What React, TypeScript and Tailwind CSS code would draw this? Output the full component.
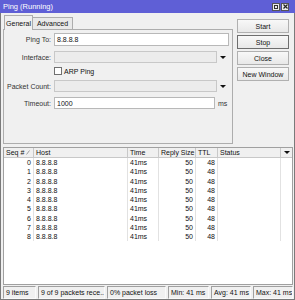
import React from "react";

const rows = Array.from({ length: 9 }, (_, i) => i);

function Arrow() {
  return (
    <div className="w-0 h-0 border-l-[3px] border-r-[3px] border-t-[3px] border-l-transparent border-r-transparent border-t-[#111]" />
  );
}

function Btn({ label, focus }: { label: string; focus?: boolean }) {
  return (
    <div
      className={`h-[14px] flex items-center justify-center bg-gradient-to-b from-[#f8f8f8] to-[#e8e8e8] border ${
        focus ? "border-[#6e6e6e]" : "border-[#b0b0b0]"
      }`}
    >
      {label}
    </div>
  );
}

export default function App() {
  const cols = [
    { w: "w-[30px]", label: "Seq #" },
    { w: "w-[94px]", label: "Host" },
    { w: "w-[31px]", label: "Time" },
    { w: "w-[37px]", label: "Reply Size" },
    { w: "w-[22px]", label: "TTL" },
    { w: "w-[63px]", label: "Status" },
  ];
  return (
    <div className="w-[295px] h-[300px] flex flex-col bg-[#f0f0f0] text-[7px] leading-none text-[#111] overflow-hidden font-['Liberation_Sans',Arial,sans-serif]">
      {/* Title bar */}
      <div className="h-[13px] bg-[#5f5fd6] flex items-center justify-between pl-[3px] pr-[6px]">
        <span className="text-white text-[7.5px]">Ping (Running)</span>
        <div className="flex gap-[1px]">
          <div className="w-[8px] h-[8px] bg-[#ececec] border border-[#555] flex items-center justify-center">
            <div className="w-[4px] h-[4px] border border-[#333] border-t-[1.5px]" />
          </div>
          <div className="w-[8px] h-[8px] bg-[#ececec] border border-[#555] flex items-center justify-center">
            <svg width="5" height="5" viewBox="0 0 5 5">
              <path d="M0.5 0.5 L4.5 4.5 M4.5 0.5 L0.5 4.5" stroke="#222" strokeWidth="1.2" />
            </svg>
          </div>
        </div>
      </div>

      {/* Body */}
      <div className="flex-1 flex flex-col border-x border-b border-[#7a7a7a]">
        {/* Top section */}
        <div className="h-[131px] flex pl-[2px]">
          <div className="w-[230px] flex flex-col pt-[2px]">
            <div className="h-[14px] flex items-end pl-[1px] relative z-10">
              <div className="h-[15px] w-[29px] -mb-[1px] bg-[#f0f0f0] border border-b-0 border-[#adadad] flex items-center justify-center">
                General
              </div>
              <div className="h-[12px] w-[40px] bg-[#e9e9e9] border border-l-0 border-b-0 border-[#adadad] flex items-center justify-center">
                Advanced
              </div>
            </div>
            <div className="flex-1 border border-[#adadad] bg-[#f0f0f0] pt-[3px] flex flex-col">
              {/* Ping To */}
              <div className="h-[13px] flex items-center">
                <div className="w-[47px] text-right text-[#333]">Ping To:</div>
                <div className="ml-[3px] w-[175px] h-full bg-white border border-[#b8b8b8] flex items-center pl-[2px]">
                  8.8.8.8
                </div>
              </div>
              {/* Interface */}
              <div className="h-[12px] mt-[5px] flex items-center">
                <div className="w-[47px] text-right text-[#333]">Interface:</div>
                <div className="ml-[3px] w-[163px] h-full bg-[#ececec] border border-[#c8c8c8]" />
                <div className="w-[12px] flex justify-center">
                  <Arrow />
                </div>
              </div>
              {/* ARP Ping */}
              <div className="h-[8px] mt-[4px] flex items-center">
                <div className="w-[47px]" />
                <div className="ml-[3px] w-[8px] h-[8px] bg-white border border-[#707070]" />
                <span className="ml-[2px]">ARP Ping</span>
              </div>
              {/* Packet Count */}
              <div className="h-[12px] mt-[5px] flex items-center">
                <div className="w-[47px] text-right text-[#333] whitespace-nowrap">Packet Count:</div>
                <div className="ml-[3px] w-[163px] h-full bg-[#ececec] border border-[#c8c8c8]" />
                <div className="w-[12px] flex justify-center">
                  <Arrow />
                </div>
              </div>
              {/* Timeout */}
              <div className="h-[12px] mt-[5px] flex items-center">
                <div className="w-[47px] text-right text-[#333]">Timeout:</div>
                <div className="ml-[3px] w-[161px] h-full bg-white border border-[#b8b8b8] flex items-center pl-[2px]">
                  1000
                </div>
                <span className="ml-[3px] text-[#333]">ms</span>
              </div>
            </div>
          </div>
          <div className="ml-[4px] w-[52px] mt-[6px] flex flex-col gap-[2px]">
            <Btn label="Start" />
            <Btn label="Stop" focus />
            <Btn label="Close" />
            <Btn label="New Window" />
          </div>
        </div>

        {/* Table */}
        <div className="mt-[3px] ml-[2px] w-[290px] h-[138px] border border-[#a0a0a0] bg-white flex flex-col">
          <div className="h-[10px] flex bg-[#f0f0f0] border-b border-[#c8c8c8]">
            {cols.map((c, i) => (
              <div
                key={c.label}
                className={`${c.w} h-full border-r border-[#c8c8c8] flex items-center pl-[2px] whitespace-nowrap`}
              >
                {c.label}
                {i === 0 && (
                  <svg className="ml-[2px]" width="4" height="5" viewBox="0 0 4 5">
                    <path d="M0.5 4.5 L3.5 0.5" stroke="#888" strokeWidth="0.8" />
                  </svg>
                )}
              </div>
            ))}
            <div className="flex-1 flex items-center justify-center">
              <Arrow />
            </div>
          </div>
          {rows.map((r) => (
            <div key={r} className="h-[9.25px] flex">
              <div className="w-[30px] border-r border-[#e2e2e2] text-right pr-[2px] flex items-center justify-end">
                {r}
              </div>
              <div className="w-[94px] border-r border-[#e2e2e2] pl-[2px] flex items-center">8.8.8.8</div>
              <div className="w-[31px] border-r border-[#e2e2e2] pl-[2px] flex items-center">41ms</div>
              <div className="w-[37px] border-r border-[#e2e2e2] pr-[2px] flex items-center justify-end">50</div>
              <div className="w-[22px] border-r border-[#e2e2e2] pr-[2px] flex items-center justify-end">48</div>
              <div className="w-[63px] border-r border-[#e2e2e2]" />
              <div className="flex-1" />
            </div>
          ))}
        </div>

        {/* Status bar */}
        <div className="mt-[1px] ml-[2px] h-[13px] flex gap-[2px]">
          {[
            ["w-[33px]", "9 items"],
            ["w-[67px]", "9 of 9 packets rece..."],
            ["w-[59px]", "0% packet loss"],
            ["w-[41px]", "Min: 41 ms"],
            ["w-[40px]", "Avg: 41 ms"],
            ["w-[40px]", "Max: 41 ms"],
          ].map(([w, t]) => (
            <div
              key={t}
              className={`${w} h-full border border-t-[#a0a0a0] border-l-[#a0a0a0] border-r-[#fafafa] border-b-[#fafafa] flex items-center pl-[2px] whitespace-nowrap overflow-hidden`}
            >
              {t}
            </div>
          ))}
        </div>
      </div>
    </div>
  );
}
